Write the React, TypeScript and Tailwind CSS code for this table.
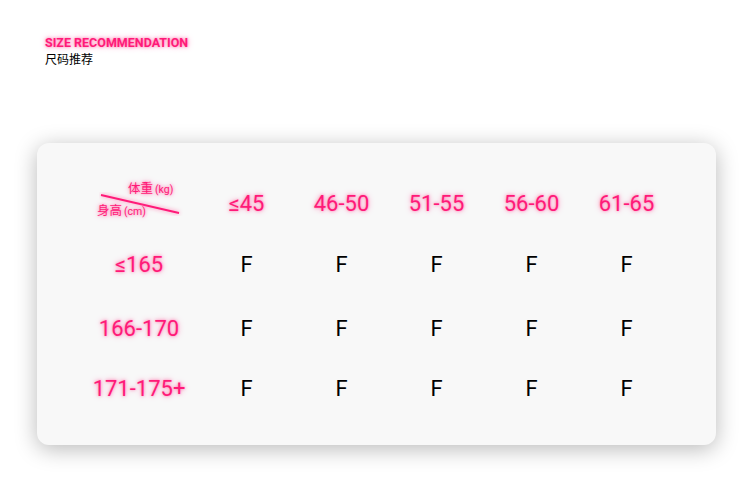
const glow = 'text-[#ff1a78] [text-shadow:0_0_3px_#ff7ab0,0_0_6px_#ffa3c8]'

const weights = ['≤45', '46-50', '51-55', '56-60', '61-65']
const heights = [
  { label: '≤165', cls: 'h-[62px] mt-[2px]' },
  { label: '166-170', cls: 'h-[66px]' },
  { label: '171-175+', cls: 'h-[54px]' },
]

export default function App() {
  return (
    <div className="w-[750px] h-[481px] bg-white font-['Roboto','Noto_Sans_CJK_SC',sans-serif]">
      {/* Title */}
      <div className="pl-[45px] pt-[35px]">
        <div className={`text-[12.5px] font-bold leading-[15px] ${glow}`}>SIZE RECOMMENDATION</div>
        <div className="text-[12px] leading-[16px] text-black mt-[2px]">尺码推荐</div>
      </div>

      {/* Card */}
      <div className="mt-[75px] ml-[37px] w-[679px] h-[302px] rounded-[12px] bg-[#f8f8f8] shadow-[0_4px_22px_rgba(0,0,0,0.28)] px-[42px] pt-[32px]">
        <div className="grid grid-cols-[120px_repeat(5,1fr)]">
          {/* diagonal header cell */}
          <div className="relative h-[56px]">
            <svg className="absolute left-[20px] top-[17px]" width="84" height="24" viewBox="0 0 84 24">
              <line x1="2" y1="3" x2="80" y2="21" stroke="#ff1a78" strokeWidth="1.8" style={{ filter: 'drop-shadow(0 0 2px #ff7ab0)' }} />
            </svg>
            <div className={`absolute left-[49px] top-[7px] text-[12.5px] leading-[14px] ${glow}`}>
              体重<span className="text-[10.5px] ml-[2px]">(kg)</span>
            </div>
            <div className={`absolute left-[18px] top-[29px] text-[12.5px] leading-[14px] ${glow}`}>
              身高<span className="text-[10.5px] ml-[2px]">(cm)</span>
            </div>
          </div>
          {weights.map((w) => (
            <div key={w} className={`h-[56px] flex items-center justify-center text-[22px] ${glow}`}>
              {w}
            </div>
          ))}
          {heights.map((h) => (
            <div key={h.label} className="contents">
              <div className={`flex items-center justify-center text-[22px] ${h.cls} ${glow}`}>{h.label}</div>
              {weights.map((w) => (
                <div key={w} className={`flex items-center justify-center text-[22px] text-black ${h.cls}`}>
                  F
                </div>
              ))}
            </div>
          ))}
        </div>
      </div>
    </div>
  )
}
